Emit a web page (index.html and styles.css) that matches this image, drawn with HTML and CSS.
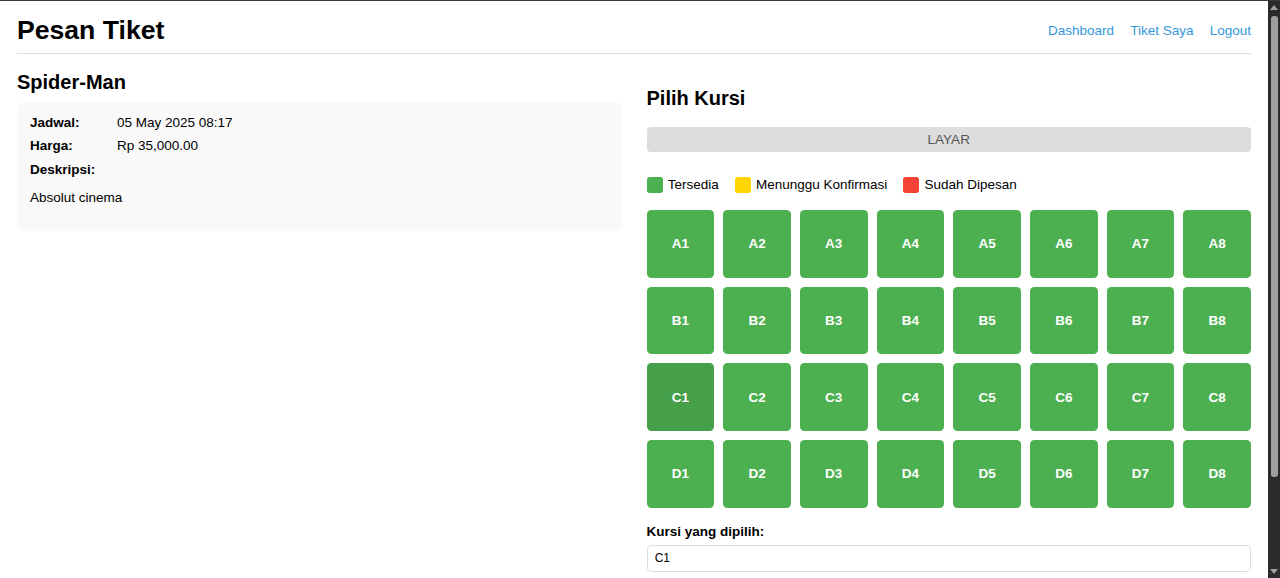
FILE: index.html
```html
<!DOCTYPE html>
<html lang="id">
<head>
<meta charset="utf-8">
<title>Pesan Tiket</title>
<link rel="stylesheet" href="styles.css">
</head>
<body>
<div class="page">
  <header class="header">
    <h1 class="title">Pesan Tiket</h1>
    <nav class="nav">
      <a href="#">Dashboard</a>
      <a href="#">Tiket Saya</a>
      <a href="#">Logout</a>
    </nav>
  </header>

  <main class="main">
    <section class="movie">
      <h2 class="movie-title">Spider-Man</h2>
      <div class="info-card">
        <div class="info-row"><span class="info-label">Jadwal:</span><span>05 May 2025 08:17</span></div>
        <div class="info-row"><span class="info-label">Harga:</span><span>Rp 35,000.00</span></div>
        <div class="info-row"><span class="info-label">Deskripsi:</span></div>
        <p class="info-desc">Absolut cinema</p>
      </div>
    </section>

    <section class="booking">
      <h2 class="booking-title">Pilih Kursi</h2>
      <div class="screen">LAYAR</div>
      <div class="legend">
        <div class="legend-item"><span class="swatch swatch-green"></span>Tersedia</div>
        <div class="legend-item"><span class="swatch swatch-yellow"></span>Menunggu Konfirmasi</div>
        <div class="legend-item"><span class="swatch swatch-red"></span>Sudah Dipesan</div>
      </div>
      <div class="seats">
        <button class="seat">A1</button><button class="seat">A2</button><button class="seat">A3</button><button class="seat">A4</button><button class="seat">A5</button><button class="seat">A6</button><button class="seat">A7</button><button class="seat">A8</button>
        <button class="seat">B1</button><button class="seat">B2</button><button class="seat">B3</button><button class="seat">B4</button><button class="seat">B5</button><button class="seat">B6</button><button class="seat">B7</button><button class="seat">B8</button>
        <button class="seat seat-active">C1</button><button class="seat">C2</button><button class="seat">C3</button><button class="seat">C4</button><button class="seat">C5</button><button class="seat">C6</button><button class="seat">C7</button><button class="seat">C8</button>
        <button class="seat">D1</button><button class="seat">D2</button><button class="seat">D3</button><button class="seat">D4</button><button class="seat">D5</button><button class="seat">D6</button><button class="seat">D7</button><button class="seat">D8</button>
      </div>
      <label class="field-label" for="kursi">Kursi yang dipilih:</label>
      <input class="field-input" id="kursi" type="text" value="C1" readonly>
    </section>
  </main>
</div>

<div class="chrome-top"></div>
<div class="scrollbar">
  <span class="arrow arrow-up"></span>
  <span class="thumb"></span>
  <span class="arrow arrow-down"></span>
</div>
</body>
</html>
```

FILE: styles.css
```css
html, body {
  margin: 0;
  padding: 0;
  overflow: hidden;
  background: #fff;
}

body {
  font-family: "Liberation Sans", Arial, sans-serif;
  font-size: 13.5px;
  color: #000;
}

.page {
  margin-right: 12px;
  padding: 0 17px;
}

.header {
  display: flex;
  justify-content: space-between;
  align-items: center;
  padding: 15.3px 0 7px;
  border-bottom: 1px solid #ddd;
}

.title {
  margin: 0;
  font-size: 26.6px;
  font-weight: bold;
  line-height: normal;
}

.nav {
  display: flex;
  gap: 16.2px;
}

.nav a {
  color: #3498db;
  text-decoration: none;
  font-size: 13.5px;
}

.main {
  display: grid;
  grid-template-columns: 1fr 1fr;
  column-gap: 25px;
  align-items: start;
}

.movie-title {
  margin: 17px 0 7.7px;
  font-size: 20px;
  line-height: normal;
}

.info-card {
  background: #f9f9f9;
  border-radius: 7px;
  padding: 13.3px 13px 13px;
}

.info-row {
  display: flex;
  margin-bottom: 8.2px;
  line-height: normal;
}

.info-label {
  width: 87px;
  font-weight: bold;
  flex-shrink: 0;
}

.info-desc {
  margin: 13.8px 0 12.1px;
  line-height: normal;
}

.booking-title {
  margin: 33px 0 16.7px;
  font-size: 20px;
  line-height: normal;
}

.screen {
  background: #ddd;
  border-radius: 4px;
  text-align: center;
  color: #555;
  padding: 4.95px 0;
  line-height: normal;
}

.legend {
  display: flex;
  align-items: center;
  gap: 16px;
  margin-top: 25px;
  line-height: normal;
}

.legend-item {
  display: flex;
  align-items: center;
  gap: 5px;
}

.swatch {
  width: 16.2px;
  height: 16.2px;
  border-radius: 2.7px;
  display: inline-block;
}

.swatch-green { background: #4caf50; }
.swatch-yellow { background: #ffd600; }
.swatch-red { background: #f44336; }

.seats {
  display: grid;
  grid-template-columns: repeat(8, 1fr);
  gap: 9px;
  margin-top: 16.8px;
}

.seat {
  aspect-ratio: 1 / 1;
  border: none;
  border-radius: 4.5px;
  background: #4caf50;
  color: #fff;
  font-family: "Liberation Sans", Arial, sans-serif;
  font-weight: bold;
  font-size: 13.5px;
  padding: 0;
  cursor: pointer;
}

.seat-active {
  background: #45a049;
}

.field-label {
  display: block;
  margin-top: 16.4px;
  font-weight: bold;
  line-height: normal;
}

.field-input {
  display: block;
  box-sizing: border-box;
  width: 100%;
  margin-top: 5.8px;
  padding: 5.4px 7.2px;
  border: 1px solid #ddd;
  border-radius: 4px;
  font-family: "Liberation Sans", Arial, sans-serif;
  font-size: 12px;
  line-height: normal;
  color: #000;
  background: #fff;
}

.chrome-top {
  position: fixed;
  top: 0;
  left: 0;
  right: 0;
  height: 1px;
  background: #3a3a3a;
}

.scrollbar {
  position: fixed;
  top: 1px;
  right: 0;
  bottom: 0;
  width: 12px;
  background: #2b2b2b;
}

.thumb {
  position: absolute;
  left: 3px;
  width: 7px;
  top: 15px;
  height: 461px;
  border-radius: 3px;
  background: #9f9f9f;
}

.arrow {
  position: absolute;
  left: 2px;
  width: 0;
  height: 0;
  border-left: 4px solid transparent;
  border-right: 4px solid transparent;
}

.arrow-up {
  top: 4px;
  border-bottom: 5px solid #a0a0a0;
}

.arrow-down {
  bottom: 4px;
  border-top: 5px solid #a0a0a0;
}
```
